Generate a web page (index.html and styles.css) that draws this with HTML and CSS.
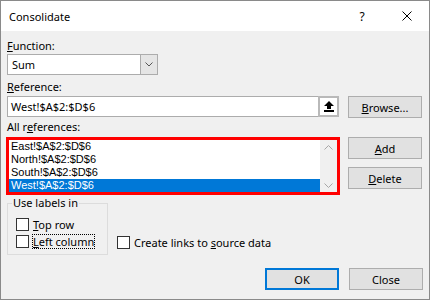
FILE: index.html
```html
<!DOCTYPE html>
<html lang="en">
<head>
  <meta charset="UTF-8">
  <title>Consolidate</title>
  <link rel="stylesheet" href="styles.css">
</head>
<body>
  <div class="dialog">
    <div class="titlebar">
      <span class="title">Consolidate</span>
      <span class="help">?</span>
      <span class="close">
        <svg width="10" height="10" viewBox="0 0 10 10"><path d="M0.5 0.5 L9.5 9.5 M9.5 0.5 L0.5 9.5" stroke="#000" stroke-width="1" fill="none"/></svg>
      </span>
    </div>

    <div class="content">
      <div class="label"><u>F</u>unction:</div>
      <div class="select">
        <span class="value">Sum</span>
        <span class="drop">
          <svg width="8" height="5" viewBox="0 0 8 5"><path d="M0.5 0.5 L4 4 L7.5 0.5" stroke="#555" fill="none"/></svg>
        </span>
      </div>

      <div class="label gap-ref"><u>R</u>eference:</div>
      <div class="row">
        <div class="ref-input">
          <span class="value">West!$A$2:$D$6</span>
          <span class="collapse">
            <svg width="10" height="11" viewBox="0 0 10 11"><path d="M5 0 L0 5 L3 5 L3 8 L7 8 L7 5 L10 5 Z" fill="#000"/><rect x="0" y="9" width="10" height="2" fill="#000"/></svg>
          </span>
        </div>
        <button class="btn"><u>B</u>rowse...</button>
      </div>

      <div class="label gap-all">All r<u>e</u>ferences:</div>
      <div class="row list-row">
        <div class="reflist">
          <div class="items">
            <div class="item">East!$A$2:$D$6</div>
            <div class="item">North!$A$2:$D$6</div>
            <div class="item">South!$A$2:$D$6</div>
            <div class="item selected">West!$A$2:$D$6</div>
          </div>
          <div class="scrollbar">
            <svg width="9" height="5" viewBox="0 0 9 5"><path d="M0.5 4.5 L4.5 0.5 L8.5 4.5" stroke="#a6a6a6" fill="none"/></svg>
            <svg width="9" height="5" viewBox="0 0 9 5"><path d="M0.5 0.5 L4.5 4.5 L8.5 0.5" stroke="#a6a6a6" fill="none"/></svg>
          </div>
        </div>
        <div class="btn-col">
          <button class="btn"><u>A</u>dd</button>
          <button class="btn"><u>D</u>elete</button>
        </div>
      </div>

      <div class="row options">
        <fieldset class="group">
          <legend>Use labels in</legend>
          <div class="check"><span class="box"></span><span class="text"><u>T</u>op row</span></div>
          <div class="check"><span class="box"></span><span class="text focus"><u>L</u>eft column</span></div>
        </fieldset>
        <div class="check links"><span class="box"></span><span class="text">Create links to <u>s</u>ource data</span></div>
      </div>

      <div class="footer">
        <button class="btn default">OK</button>
        <button class="btn">Close</button>
      </div>
    </div>
  </div>
</body>
</html>
```

FILE: styles.css
```css
* {
  box-sizing: border-box;
}

body {
  margin: 0;
  font-family: "Noto Sans", "Segoe UI", sans-serif;
  font-size: 11px;
  color: #000;
  background: #fff;
}

u {
  text-underline-offset: 1px;
}

.dialog {
  width: 430px;
  height: 300px;
  border: 1px solid #8a8a8a;
  background: #f0f0f0;
  overflow: hidden;
}

.titlebar {
  height: 30px;
  background: #fff;
  display: flex;
  align-items: center;
  padding-left: 8px;
}

.title {
  flex: 1;
}

.help {
  width: 46px;
  text-align: center;
  font-size: 12px;
}

.close {
  width: 44px;
  display: flex;
  justify-content: center;
}

.content {
  padding: 8px 6px 0 6px;
}

.label {
  height: 14px;
  line-height: 14px;
}

.gap-ref {
  margin-top: 5px;
}

.gap-all {
  margin-top: 2px;
}

.select {
  width: 151px;
  height: 21px;
  margin-top: 1px;
  border: 1px solid #acacac;
  background: #fff;
  display: flex;
}

.select .value {
  flex: 1;
  padding-left: 4px;
  line-height: 19px;
}

.select .drop {
  width: 17px;
  background: #e5e5e5;
  border-left: 1px solid #acacac;
  display: flex;
  align-items: center;
  justify-content: center;
}

.row {
  display: flex;
  align-items: flex-start;
  margin-top: 2px;
}

.ref-input {
  width: 332px;
  height: 21px;
  margin-right: 9px;
  border: 1px solid #acacac;
  background: #fff;
  display: flex;
}

.ref-input .value {
  flex: 1;
  padding-left: 3px;
  line-height: 19px;
}

.collapse {
  width: 21px;
  border: 2px solid #b9b9b9;
  margin: -1px -1px -1px 0;
  background: #fff;
  display: flex;
  align-items: center;
  justify-content: center;
}

.btn {
  width: 74px;
  height: 22px;
  padding: 0;
  font-family: inherit;
  font-size: 11px;
  color: #000;
  background: #e1e1e1;
  border: 1px solid #adadad;
}

.btn.default {
  border: 2px solid #0078d7;
}

.list-row {
  margin-top: 3px;
}

.reflist {
  width: 334px;
  height: 58px;
  margin-left: -1px;
  margin-right: 8px;
  border: 3px solid #ff0000;
  background: #fff;
  display: flex;
}

.items {
  flex: 1;
}

.item {
  height: 13px;
  line-height: 13px;
  padding-left: 2px;
  font-family: "Liberation Sans", Arial, sans-serif;
  font-size: 11px;
  white-space: nowrap;
}

.item.selected {
  background: #0078d7;
  color: #fff;
}

.scrollbar {
  width: 17px;
  background: #f0f0f0;
  display: flex;
  flex-direction: column;
  justify-content: space-between;
  align-items: center;
  padding: 5px 0 4px;
}

.btn-col {
  display: flex;
  flex-direction: column;
  gap: 8px;
}

.options {
  margin-top: 1px;
}

.group {
  width: 101px;
  margin: 0;
  padding: 6px 0 4px 8px;
  border: 1px solid #dcdcdc;
}

.group legend {
  margin-left: -4px;
  padding: 0 1px;
  line-height: 14px;
}

.check {
  display: flex;
  align-items: center;
  height: 17px;
}

.box {
  width: 13px;
  height: 13px;
  margin-right: 3px;
  border: 1px solid #333;
  background: #fff;
}

.check .text {
  border: 1px dotted transparent;
  line-height: 13px;
  white-space: nowrap;
}

.check .text.focus {
  border-color: #000;
}

.links {
  margin-left: 9px;
  margin-top: 38px;
}

.footer {
  display: flex;
  justify-content: flex-end;
  gap: 10px;
  margin-top: 13px;
}
```
